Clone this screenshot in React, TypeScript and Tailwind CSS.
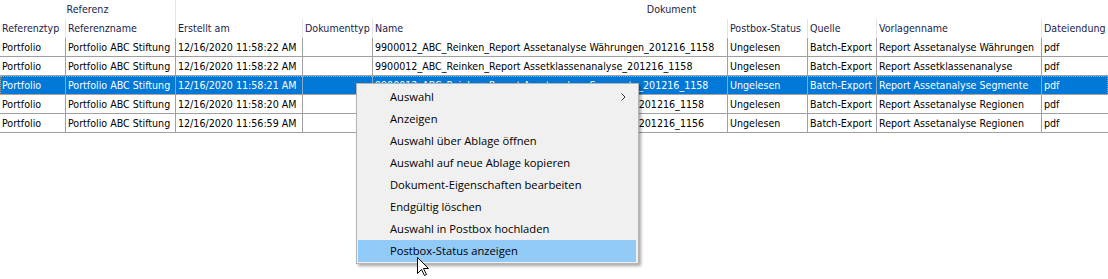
import { ReactNode } from "react";

const COLS = [66, 110, 127, 70, 355, 80, 69, 165, 120];

const HEADERS = [
  "Referenztyp",
  "Referenzname",
  "Erstellt am",
  "Dokumenttyp",
  "Name",
  "Postbox-Status",
  "Quelle",
  "Vorlagenname",
  "Dateiendung",
];

const ROWS: string[][] = [
  ["Portfolio", "Portfolio ABC Stiftung", "12/16/2020 11:58:22 AM", "", "9900012_ABC_Reinken_Report Assetanalyse Währungen_201216_1158", "Ungelesen", "Batch-Export", "Report Assetanalyse Währungen", "pdf"],
  ["Portfolio", "Portfolio ABC Stiftung", "12/16/2020 11:58:22 AM", "", "9900012_ABC_Reinken_Report Assetklassenanalyse_201216_1158", "Ungelesen", "Batch-Export", "Report Assetklassenanalyse", "pdf"],
  ["Portfolio", "Portfolio ABC Stiftung", "12/16/2020 11:58:21 AM", "", "9900012_ABC_Reinken_Report Assetanalyse Segmente_201216_1158", "Ungelesen", "Batch-Export", "Report Assetanalyse Segmente", "pdf"],
  ["Portfolio", "Portfolio ABC Stiftung", "12/16/2020 11:58:20 AM", "", "9900012_ABC_Reinken_Report Assetanalyse Regionen_201216_1158", "Ungelesen", "Batch-Export", "Report Assetanalyse Regionen", "pdf"],
  ["Portfolio", "Portfolio ABC Stiftung", "12/16/2020 11:56:59 AM", "", "9900012_ABC_Reinken_Report Assetanalyse Regionen_201216_1156", "Ungelesen", "Batch-Export", "Report Assetanalyse Regionen", "pdf"],
];

const MENU = [
  "Auswahl",
  "Anzeigen",
  "Auswahl über Ablage öffnen",
  "Auswahl auf neue Ablage kopieren",
  "Dokument-Eigenschaften bearbeiten",
  "Endgültig löschen",
  "Auswahl in Postbox hochladen",
  "Postbox-Status anzeigen",
];

function Cell({ w, className, children }: { w: number; className: string; children?: ReactNode }) {
  return (
    <div
      className={`shrink-0 overflow-hidden whitespace-nowrap border-r pl-[2px] leading-[19px] ${className}`}
      style={{ width: w }}
    >
      {children}
    </div>
  );
}

function Cursor() {
  return (
    <svg width="13" height="20" viewBox="0 0 13 20" className="absolute left-[417px] top-[257px]">
      <path
        d="M0.5 0.5 L0.5 16.5 L4.5 12.5 L7.5 18.5 L9.5 17.5 L6.5 11.5 L11.5 11.5 Z"
        fill="#fff"
        stroke="#000"
        strokeWidth="1"
      />
    </svg>
  );
}

export default function App() {
  return (
    <div className="relative h-[279px] w-[1108px] overflow-hidden bg-white text-[10.6px] text-black [font-family:'DejaVu_Sans_Condensed','DejaVu_Sans',sans-serif]">
      {/* group header */}
      <div className="flex h-[19px] text-[#1c1c4c]">
        <div className="w-[176px] shrink-0 border-r border-[#e5e5e5] text-center leading-[19px]">Referenz</div>
        <div className="w-[991px] shrink-0 text-center leading-[19px]">Dokument</div>
      </div>

      {/* column header */}
      <div className="flex h-[19px] text-[#1c1c4c]">
        {HEADERS.map((h, i) => (
          <Cell key={h} w={COLS[i]} className="border-[#e5e5e5]">
            {h}
          </Cell>
        ))}
      </div>

      {ROWS.map((row, r) => {
        const selected = r === 2;
        return (
          <div
            key={r}
            className={`flex h-[19px] border-b border-[#a0a0a0] ${
              selected
                ? "bg-[#0078d7] text-white outline outline-1 outline-dotted outline-[#e89a50] -outline-offset-1"
                : ""
            }`}
          >
            {row.map((v, i) => (
              <Cell key={i} w={COLS[i]} className={`h-[18px] ${selected ? "border-[#8aa8c8]" : "border-[#a0a0a0]"}`}>
                {v}
              </Cell>
            ))}
          </div>
        );
      })}

      {/* context menu */}
      <div className="absolute left-[356px] top-[83px] w-[283px] border border-[#b4b4b4] bg-[#f0f0f0] pb-px pl-px pr-[2px] pt-[2px] shadow-[2px_2px_3px_rgba(0,0,0,0.35)] text-[11.2px] text-black [font-family:'Open_Sans','Noto_Sans',sans-serif]">
        {MENU.map((m, i) => (
          <div
            key={m}
            className={`relative flex h-[22px] items-center pl-[32px] ${i === MENU.length - 1 ? "bg-[#91c9f7]" : ""}`}
          >
            {m}
            {i === 0 && (
              <svg width="5" height="8" viewBox="0 0 5 8" className="absolute right-[10px] top-[7px]">
                <polyline points="0.5,0.5 4,4 0.5,7.5" fill="none" stroke="#333" strokeWidth="1" />
              </svg>
            )}
          </div>
        ))}
      </div>

      <Cursor />
    </div>
  );
}
